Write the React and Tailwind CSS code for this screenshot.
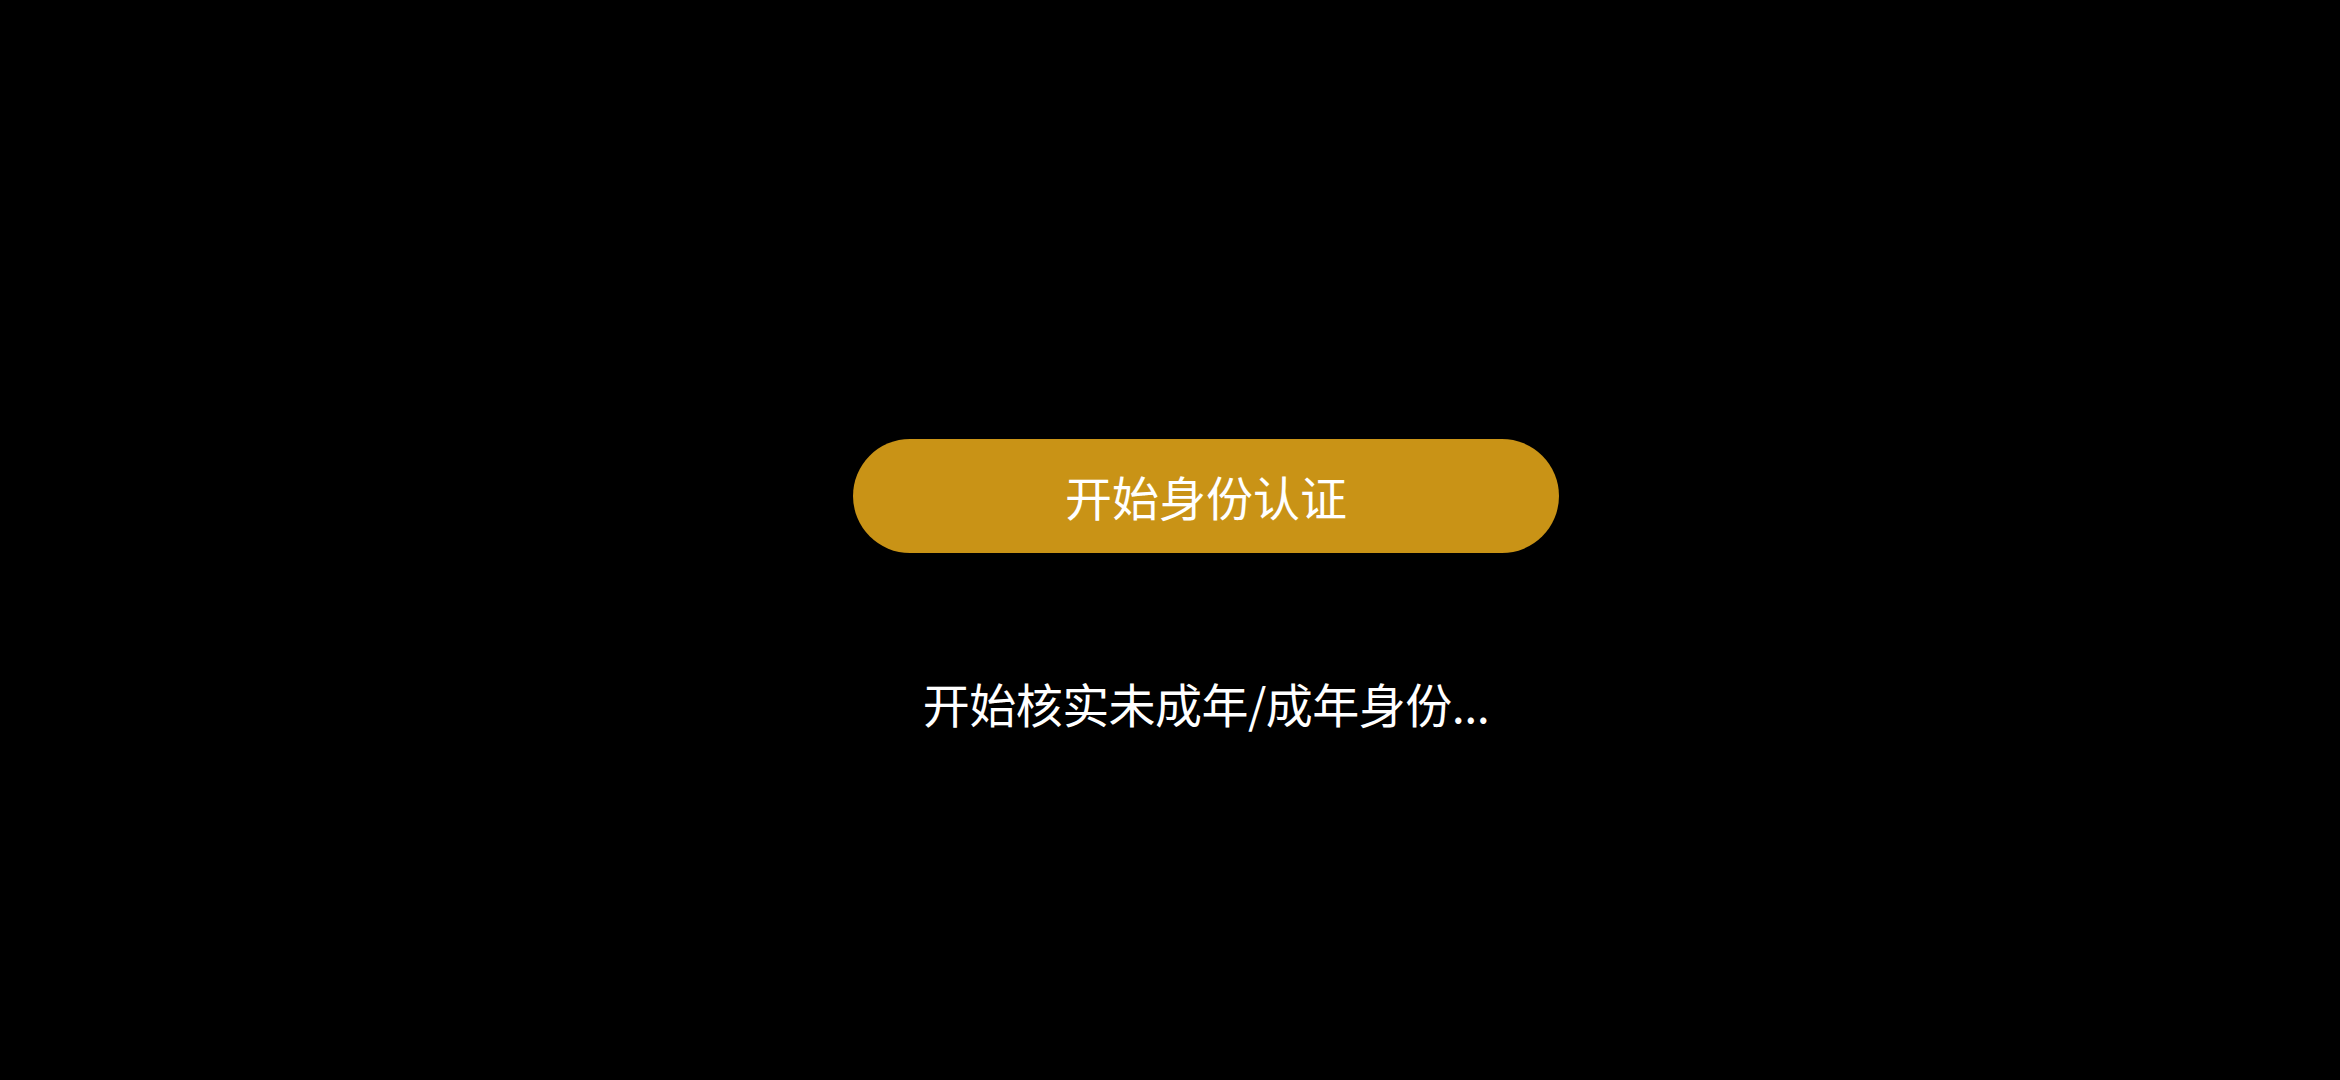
export default function App() {
  return (
    <div
      className="h-[1080px] w-full bg-black pl-[72px] flex flex-col items-center pt-[439px]"
      style={{ fontFamily: '"Noto Sans CJK SC", "Noto Sans", sans-serif' }}
    >
      <button className="w-[706px] h-[114px] rounded-full bg-[#c99316] text-white text-[47px] leading-none flex items-center justify-center pb-[2px]">
        开始身份认证
      </button>
      <div className="mt-[126px] text-white text-[47px] leading-[47px] tracking-[-0.55px]">
        开始核实未成年/成年身份...
      </div>
    </div>
  );
}
